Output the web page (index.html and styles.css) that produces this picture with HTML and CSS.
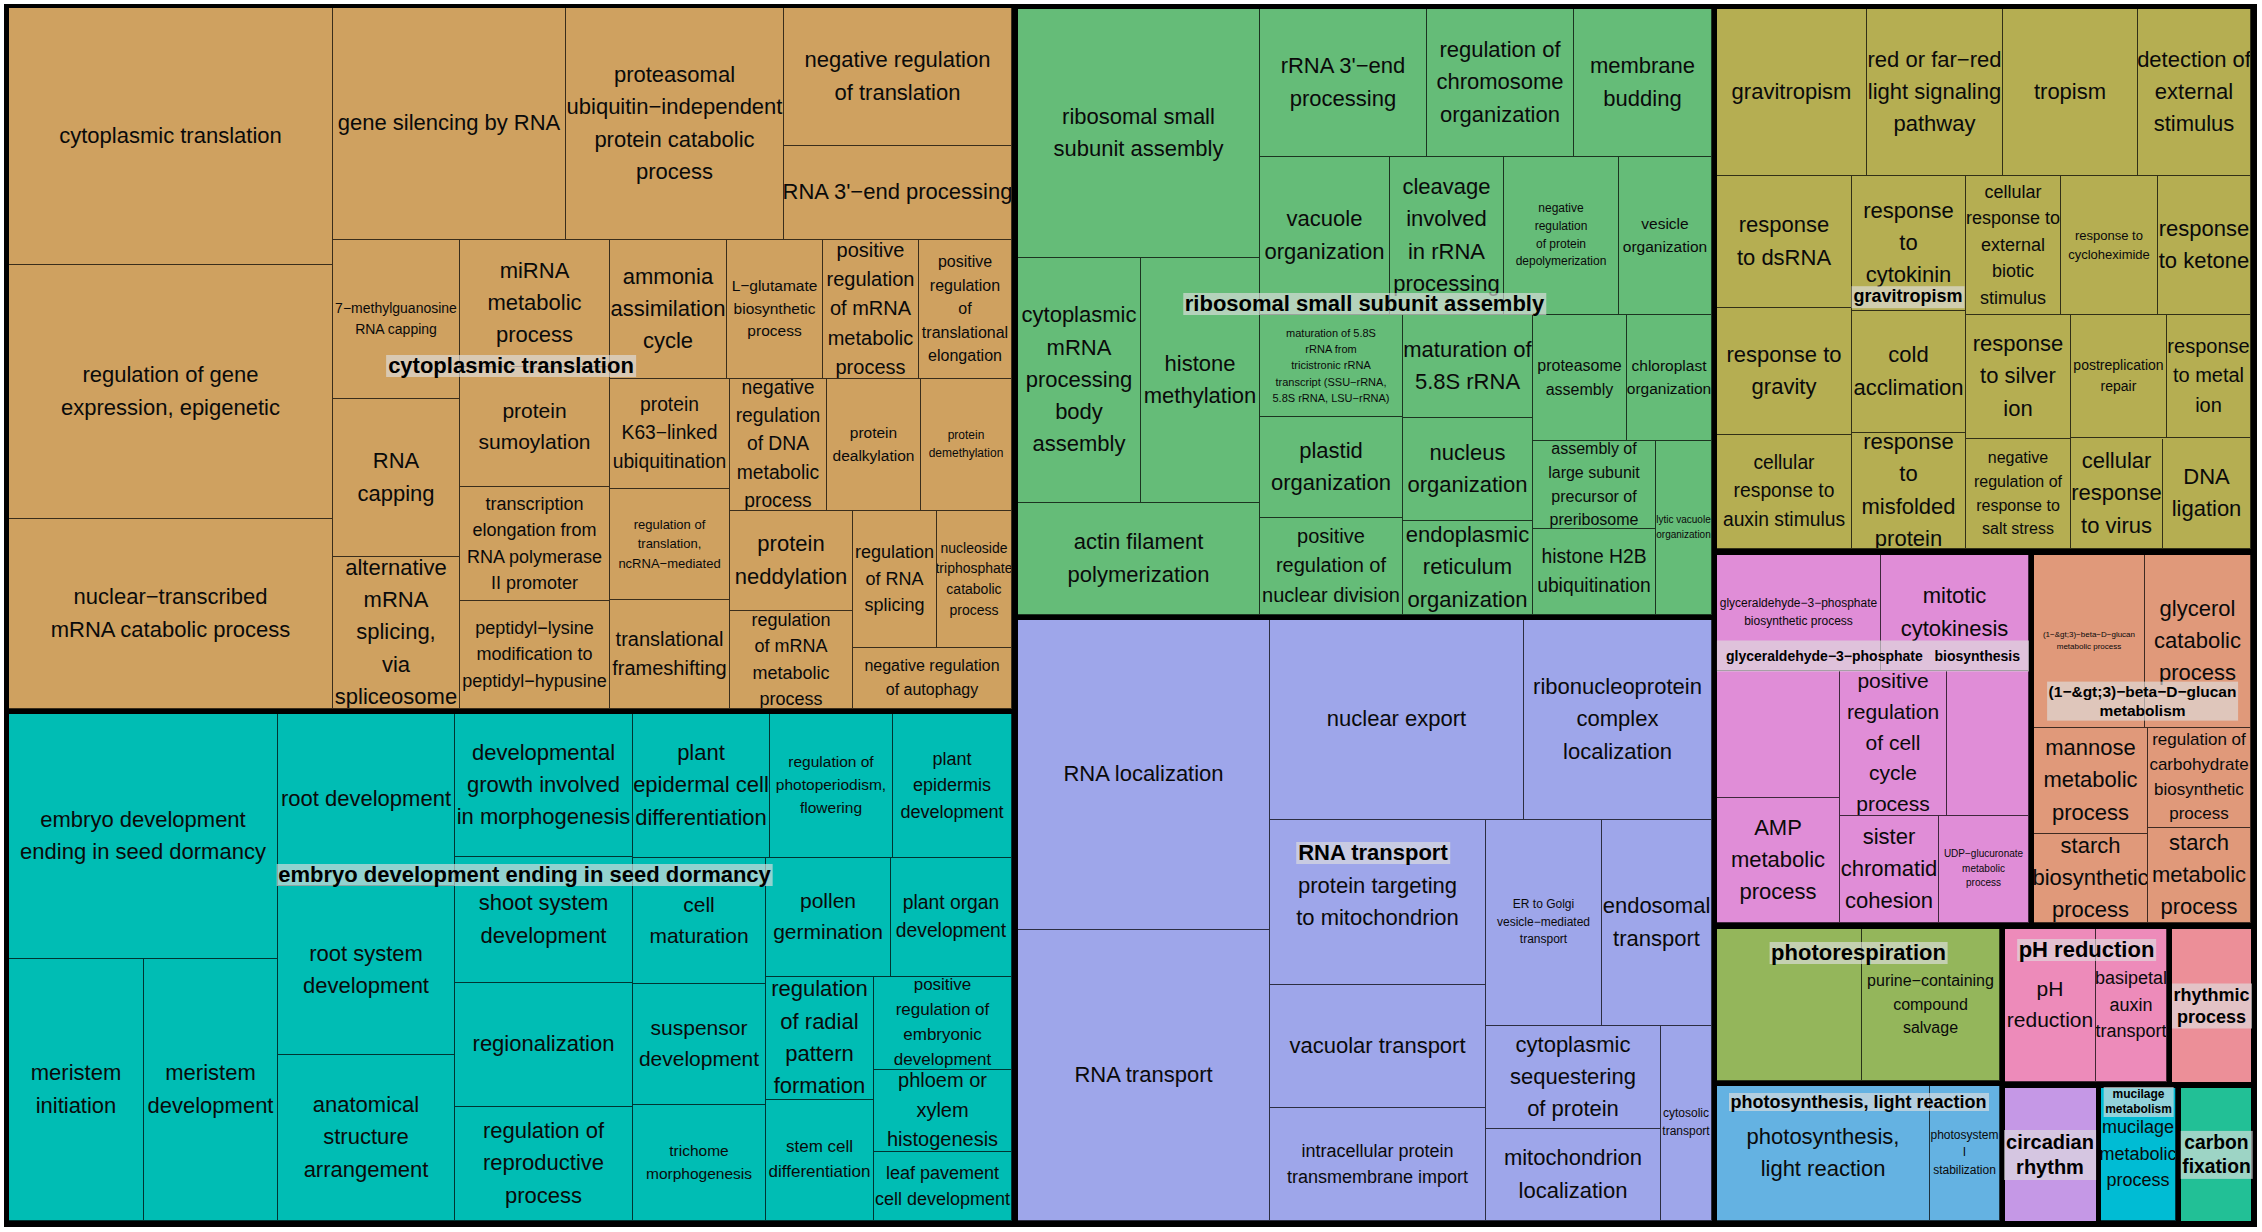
FILE: index.html
```html
<!DOCTYPE html>
<html lang="en">
<head>
<meta charset="utf-8">
<title>REVIGO treemap</title>
<link rel="stylesheet" href="styles.css">
</head>
<body>
<div class="treemap">

  <section class="group g-brown" style="left:9px;top:8px;width:1003px;height:701px">
    <div class="cell f22" style="left:0;top:0;width:324px;height:257px"><span>cytoplasmic translation</span></div>
    <div class="cell f22" style="left:0;top:257px;width:324px;height:254px"><span>regulation of gene<br>expression, epigenetic</span></div>
    <div class="cell f22" style="left:0;top:511px;width:324px;height:190px"><span>nuclear−transcribed<br>mRNA catabolic process</span></div>
    <div class="cell f22" style="left:324px;top:0;width:233px;height:232px"><span>gene silencing by RNA</span></div>
    <div class="cell f22" style="left:557px;top:0;width:218px;height:232px"><span>proteasomal<br>ubiquitin−independent<br>protein catabolic<br>process</span></div>
    <div class="cell f22" style="left:775px;top:0;width:228px;height:138px"><span>negative regulation<br>of translation</span></div>
    <div class="cell f22" style="left:775px;top:138px;width:228px;height:94px"><span>RNA 3'−end processing</span></div>
    <div class="cell f14" style="left:324px;top:232px;width:127px;height:159px"><span>7−methylguanosine<br>RNA capping</span></div>
    <div class="cell f22" style="left:324px;top:391px;width:127px;height:158px"><span>RNA<br>capping</span></div>
    <div class="cell f22" style="left:324px;top:549px;width:127px;height:152px"><span>alternative<br>mRNA<br>splicing,<br>via<br>spliceosome</span></div>
    <div class="cell f22" style="left:451px;top:232px;width:150px;height:127px"><span>miRNA<br>metabolic<br>process</span></div>
    <div class="cell f21" style="left:451px;top:359px;width:150px;height:120px"><span>protein<br>sumoylation</span></div>
    <div class="cell f18" style="left:451px;top:479px;width:150px;height:114px"><span>transcription<br>elongation from<br>RNA polymerase<br>II promoter</span></div>
    <div class="cell f18" style="left:451px;top:593px;width:150px;height:108px"><span>peptidyl−lysine<br>modification to<br>peptidyl−hypusine</span></div>
    <div class="cell f22" style="left:601px;top:232px;width:117px;height:139px"><span>ammonia<br>assimilation<br>cycle</span></div>
    <div class="cell f19" style="left:601px;top:371px;width:120px;height:110px"><span>protein<br>K63−linked<br>ubiquitination</span></div>
    <div class="cell f13" style="left:601px;top:481px;width:120px;height:111px"><span>regulation of<br>translation,<br>ncRNA−mediated</span></div>
    <div class="cell f20" style="left:601px;top:592px;width:120px;height:109px"><span>translational<br>frameshifting</span></div>
    <div class="cell f15" style="left:718px;top:232px;width:96px;height:139px"><span>L−glutamate<br>biosynthetic<br>process</span></div>
    <div class="cell f20" style="left:814px;top:232px;width:96px;height:139px"><span>positive<br>regulation<br>of mRNA<br>metabolic<br>process</span></div>
    <div class="cell f16" style="left:910px;top:232px;width:93px;height:139px"><span>positive<br>regulation<br>of<br>translational<br>elongation</span></div>
    <div class="cell f19" style="left:721px;top:371px;width:97px;height:132px"><span>negative<br>regulation<br>of DNA<br>metabolic<br>process</span></div>
    <div class="cell f15" style="left:818px;top:371px;width:94px;height:132px"><span>protein<br>dealkylation</span></div>
    <div class="cell f12" style="left:912px;top:371px;width:91px;height:132px"><span>protein<br>demethylation</span></div>
    <div class="cell f22" style="left:721px;top:503px;width:123px;height:100px"><span>protein<br>neddylation</span></div>
    <div class="cell f18" style="left:721px;top:603px;width:123px;height:98px"><span>regulation<br>of mRNA<br>metabolic<br>process</span></div>
    <div class="cell f18" style="left:844px;top:503px;width:84px;height:137px"><span>regulation<br>of RNA<br>splicing</span></div>
    <div class="cell f14" style="left:928px;top:503px;width:75px;height:137px"><span>nucleoside<br>triphosphate<br>catabolic<br>process</span></div>
    <div class="cell f16" style="left:844px;top:640px;width:159px;height:61px"><span>negative regulation<br>of autophagy</span></div>
    <div class="glabel f22" style="left:502px;top:357.5px">cytoplasmic translation</div>
  </section>

  <section class="group g-teal" style="left:9px;top:714px;width:1003px;height:507px">
    <div class="cell f22" style="left:0;top:0;width:269px;height:245px"><span>embryo development<br>ending in seed dormancy</span></div>
    <div class="cell f22" style="left:0;top:245px;width:135px;height:262px"><span>meristem<br>initiation</span></div>
    <div class="cell f22" style="left:135px;top:245px;width:134px;height:262px"><span>meristem<br>development</span></div>
    <div class="cell f22" style="left:269px;top:0;width:177px;height:172px"><span>root development</span></div>
    <div class="cell f22" style="left:269px;top:172px;width:177px;height:169px"><span>root system<br>development</span></div>
    <div class="cell f22" style="left:269px;top:341px;width:177px;height:166px"><span>anatomical<br>structure<br>arrangement</span></div>
    <div class="cell f22" style="left:446px;top:0;width:178px;height:143px"><span>developmental<br>growth involved<br>in morphogenesis</span></div>
    <div class="cell f22" style="left:446px;top:143px;width:178px;height:126px"><span>shoot system<br>development</span></div>
    <div class="cell f22" style="left:446px;top:269px;width:178px;height:124px"><span>regionalization</span></div>
    <div class="cell f22" style="left:446px;top:393px;width:178px;height:114px"><span>regulation of<br>reproductive<br>process</span></div>
    <div class="cell f22" style="left:624px;top:0;width:137px;height:144px"><span>plant<br>epidermal cell<br>differentiation</span></div>
    <div class="cell f21" style="left:624px;top:144px;width:133px;height:126px"><span>cell<br>maturation</span></div>
    <div class="cell f21" style="left:624px;top:270px;width:133px;height:121px"><span>suspensor<br>development</span></div>
    <div class="cell f15" style="left:624px;top:391px;width:133px;height:116px"><span>trichome<br>morphogenesis</span></div>
    <div class="cell f15" style="left:761px;top:0;width:123px;height:144px"><span>regulation of<br>photoperiodism,<br>flowering</span></div>
    <div class="cell f18" style="left:884px;top:0;width:119px;height:144px"><span>plant<br>epidermis<br>development</span></div>
    <div class="cell f21" style="left:757px;top:144px;width:125px;height:119px"><span>pollen<br>germination</span></div>
    <div class="cell f19" style="left:882px;top:144px;width:121px;height:119px"><span>plant organ<br>development</span></div>
    <div class="cell f22" style="left:757px;top:263px;width:108px;height:123px"><span>regulation<br>of radial<br>pattern<br>formation</span></div>
    <div class="cell f17" style="left:757px;top:386px;width:108px;height:121px"><span>stem cell<br>differentiation</span></div>
    <div class="cell f17" style="left:865px;top:263px;width:138px;height:93px"><span>positive<br>regulation of<br>embryonic<br>development</span></div>
    <div class="cell f20" style="left:865px;top:356px;width:138px;height:82px"><span>phloem or<br>xylem<br>histogenesis</span></div>
    <div class="cell f18" style="left:865px;top:438px;width:138px;height:69px"><span>leaf pavement<br>cell development</span></div>
    <div class="glabel f22" style="left:515.5px;top:160.5px">embryo development ending in seed dormancy</div>
  </section>

  <section class="group g-green" style="left:1018px;top:9px;width:694px;height:606px">
    <div class="cell f22" style="left:0;top:0;width:242px;height:249px"><span>ribosomal small<br>subunit assembly</span></div>
    <div class="cell f22" style="left:0;top:249px;width:123px;height:245px"><span>cytoplasmic<br>mRNA<br>processing<br>body<br>assembly</span></div>
    <div class="cell f22" style="left:123px;top:249px;width:119px;height:245px"><span>histone<br>methylation</span></div>
    <div class="cell f22" style="left:0;top:494px;width:242px;height:112px"><span>actin filament<br>polymerization</span></div>
    <div class="cell f22" style="left:242px;top:0;width:167px;height:148px"><span>rRNA 3'−end<br>processing</span></div>
    <div class="cell f22" style="left:409px;top:0;width:147px;height:148px"><span>regulation of<br>chromosome<br>organization</span></div>
    <div class="cell f22" style="left:556px;top:0;width:138px;height:148px"><span>membrane<br>budding</span></div>
    <div class="cell f22" style="left:242px;top:148px;width:130px;height:158px"><span>vacuole<br>organization</span></div>
    <div class="cell f22" style="left:372px;top:148px;width:114px;height:158px"><span>cleavage<br>involved<br>in rRNA<br>processing</span></div>
    <div class="cell f12" style="left:486px;top:148px;width:115px;height:158px"><span>negative<br>regulation<br>of protein<br>depolymerization</span></div>
    <div class="cell f15" style="left:601px;top:148px;width:93px;height:158px"><span>vesicle<br>organization</span></div>
    <div class="cell f11" style="left:242px;top:306px;width:143px;height:102px"><span>maturation of 5.8S<br>rRNA from<br>tricistronic rRNA<br>transcript (SSU−rRNA,<br>5.8S rRNA, LSU−rRNA)</span></div>
    <div class="cell f22" style="left:385px;top:306px;width:130px;height:103px"><span>maturation of<br>5.8S rRNA</span></div>
    <div class="cell f16" style="left:515px;top:306px;width:94px;height:126px"><span>proteasome<br>assembly</span></div>
    <div class="cell f15" style="left:609px;top:306px;width:85px;height:126px"><span>chloroplast<br>organization</span></div>
    <div class="cell f22" style="left:242px;top:408px;width:143px;height:101px"><span>plastid<br>organization</span></div>
    <div class="cell f22" style="left:385px;top:409px;width:130px;height:103px"><span>nucleus<br>organization</span></div>
    <div class="cell f20" style="left:242px;top:509px;width:143px;height:97px"><span>positive<br>regulation of<br>nuclear division</span></div>
    <div class="cell f22" style="left:385px;top:512px;width:130px;height:94px"><span>endoplasmic<br>reticulum<br>organization</span></div>
    <div class="cell f16" style="left:515px;top:432px;width:123px;height:88px"><span>assembly of<br>large subunit<br>precursor of<br>preribosome</span></div>
    <div class="cell f19" style="left:515px;top:520px;width:123px;height:86px"><span>histone H2B<br>ubiquitination</span></div>
    <div class="cell f10" style="left:638px;top:432px;width:56px;height:174px"><span>lytic vacuole<br>organization</span></div>
    <div class="glabel f22" style="left:346.5px;top:295px">ribosomal small subunit assembly</div>
  </section>

  <section class="group g-purple" style="left:1018px;top:620px;width:694px;height:601px">
    <div class="cell f22" style="left:0;top:0;width:252px;height:310px"><span>RNA localization</span></div>
    <div class="cell f22" style="left:0;top:310px;width:252px;height:291px"><span>RNA transport</span></div>
    <div class="cell f22" style="left:252px;top:0;width:254px;height:200px"><span>nuclear export</span></div>
    <div class="cell f22" style="left:506px;top:0;width:188px;height:200px"><span>ribonucleoprotein<br>complex<br>localization</span></div>
    <div class="cell f22" style="left:252px;top:200px;width:216px;height:165px"><span>protein targeting<br>to mitochondrion</span></div>
    <div class="cell f22" style="left:252px;top:365px;width:216px;height:123px"><span>vacuolar transport</span></div>
    <div class="cell f18" style="left:252px;top:488px;width:216px;height:113px"><span>intracellular protein<br>transmembrane import</span></div>
    <div class="cell f12" style="left:468px;top:200px;width:116px;height:206px"><span>ER to Golgi<br>vesicle−mediated<br>transport</span></div>
    <div class="cell f22" style="left:584px;top:200px;width:110px;height:206px"><span>endosomal<br>transport</span></div>
    <div class="cell f22" style="left:468px;top:406px;width:175px;height:103px"><span>cytoplasmic<br>sequestering<br>of protein</span></div>
    <div class="cell f22" style="left:468px;top:509px;width:175px;height:92px"><span>mitochondrion<br>localization</span></div>
    <div class="cell f12" style="left:643px;top:406px;width:51px;height:195px"><span>cytosolic<br>transport</span></div>
    <div class="glabel f22" style="left:355px;top:232.5px">RNA transport</div>
  </section>

  <section class="group g-olive" style="left:1717px;top:9px;width:534px;height:540px">
    <div class="cell f22" style="left:0;top:0;width:150px;height:167px"><span>gravitropism</span></div>
    <div class="cell f22" style="left:150px;top:0;width:136px;height:167px"><span>red or far−red<br>light signaling<br>pathway</span></div>
    <div class="cell f22" style="left:286px;top:0;width:135px;height:167px"><span>tropism</span></div>
    <div class="cell f22" style="left:421px;top:0;width:113px;height:167px"><span>detection of<br>external<br>stimulus</span></div>
    <div class="cell f22" style="left:0;top:167px;width:135px;height:132px"><span>response<br>to dsRNA</span></div>
    <div class="cell f22" style="left:135px;top:167px;width:114px;height:135px"><span>response<br>to<br>cytokinin</span></div>
    <div class="cell f18" style="left:249px;top:167px;width:95px;height:139px"><span>cellular<br>response to<br>external<br>biotic<br>stimulus</span></div>
    <div class="cell f13" style="left:344px;top:167px;width:97px;height:139px"><span>response to<br>cycloheximide</span></div>
    <div class="cell f22" style="left:441px;top:167px;width:93px;height:139px"><span>response<br>to ketone</span></div>
    <div class="cell f22" style="left:0;top:299px;width:135px;height:127px"><span>response to<br>gravity</span></div>
    <div class="cell f22" style="left:135px;top:302px;width:114px;height:122px"><span>cold<br>acclimation</span></div>
    <div class="cell f22" style="left:249px;top:306px;width:105px;height:124px"><span>response<br>to silver<br>ion</span></div>
    <div class="cell f14" style="left:354px;top:306px;width:96px;height:123px"><span>postreplication<br>repair</span></div>
    <div class="cell f20" style="left:450px;top:306px;width:84px;height:123px"><span>response<br>to metal<br>ion</span></div>
    <div class="cell f19" style="left:0;top:426px;width:135px;height:114px"><span>cellular<br>response to<br>auxin stimulus</span></div>
    <div class="cell f22" style="left:135px;top:424px;width:114px;height:116px"><span>response<br>to<br>misfolded<br>protein</span></div>
    <div class="cell f16" style="left:249px;top:430px;width:105px;height:110px"><span>negative<br>regulation of<br>response to<br>salt stress</span></div>
    <div class="cell f22" style="left:354px;top:430px;width:92px;height:110px"><span>cellular<br>response<br>to virus</span></div>
    <div class="cell f22" style="left:446px;top:429px;width:88px;height:111px"><span>DNA<br>ligation</span></div>
    <div class="glabel f18 tall" style="left:191px;top:288px">gravitropism</div>
  </section>

  <section class="group g-pink" style="left:1717px;top:555px;width:312px;height:368px">
    <div class="cell f12" style="left:0;top:0;width:164px;height:116px"><span>glyceraldehyde−3−phosphate<br>biosynthetic process</span></div>
    <div class="cell f22" style="left:164px;top:0;width:148px;height:116px"><span>mitotic<br>cytokinesis</span></div>
    <div class="cell" style="left:0;top:116px;width:123px;height:127px"></div>
    <div class="cell f21" style="left:123px;top:116px;width:107px;height:145px"><span>positive<br>regulation<br>of cell<br>cycle<br>process</span></div>
    <div class="cell" style="left:230px;top:116px;width:82px;height:145px"></div>
    <div class="cell f22" style="left:0;top:243px;width:123px;height:125px"><span>AMP<br>metabolic<br>process</span></div>
    <div class="cell f22" style="left:123px;top:261px;width:99px;height:107px"><span>sister<br>chromatid<br>cohesion</span></div>
    <div class="cell f10" style="left:222px;top:261px;width:90px;height:107px"><span>UDP−glucuronate<br>metabolic<br>process</span></div>
    <div class="glabel f14 band" style="left:156px;top:100.5px">glyceraldehyde−3−phosphate&nbsp;&nbsp;&nbsp;biosynthesis</div>
  </section>

  <section class="group g-orange" style="left:2034px;top:555px;width:217px;height:368px">
    <div class="cell f8" style="left:0;top:0;width:111px;height:173px"><span>(1−&amp;gt;3)−beta−D−glucan<br>metabolic process</span></div>
    <div class="cell f22" style="left:111px;top:0;width:106px;height:173px"><span>glycerol<br>catabolic<br>process</span></div>
    <div class="cell f22" style="left:0;top:173px;width:114px;height:106px"><span>mannose<br>metabolic<br>process</span></div>
    <div class="cell f17" style="left:114px;top:173px;width:103px;height:100px"><span>regulation of<br>carbohydrate<br>biosynthetic<br>process</span></div>
    <div class="cell f22" style="left:0;top:279px;width:114px;height:89px"><span>starch<br>biosynthetic<br>process</span></div>
    <div class="cell f22" style="left:114px;top:273px;width:103px;height:95px"><span>starch<br>metabolic<br>process</span></div>
    <div class="glabel f15 two" style="left:108.5px;top:146px">(1−&amp;gt;3)−beta−D−glucan<br>metabolism</div>
  </section>

  <section class="group g-leaf" style="left:1717px;top:929px;width:283px;height:152px">
    <div class="cell" style="left:0;top:0;width:145px;height:152px"></div>
    <div class="cell f16" style="left:145px;top:0;width:138px;height:152px"><span>purine−containing<br>compound<br>salvage</span></div>
    <div class="glabel f22" style="left:141.5px;top:23.5px">photorespiration</div>
  </section>

  <section class="group g-rose" style="left:2005px;top:929px;width:162px;height:153px">
    <div class="cell f21" style="left:0;top:0;width:91px;height:153px"><span>pH<br>reduction</span></div>
    <div class="cell f18" style="left:91px;top:0;width:71px;height:153px"><span>basipetal<br>auxin<br>transport</span></div>
    <div class="glabel f22" style="left:81.5px;top:21px">pH reduction</div>
  </section>

  <section class="group g-salmon" style="left:2172px;top:929px;width:79px;height:153px">
    <div class="glabel f18 two" style="left:39.5px;top:76.5px">rhythmic<br>process</div>
  </section>

  <section class="group g-sky" style="left:1717px;top:1086px;width:283px;height:135px">
    <div class="cell f22" style="left:0;top:0;width:213px;height:135px"><span>photosynthesis,<br>light reaction</span></div>
    <div class="cell f12" style="left:213px;top:0;width:70px;height:135px"><span>photosystem<br>I<br>stabilization</span></div>
    <div class="glabel f18" style="left:141.5px;top:16px">photosynthesis, light reaction</div>
  </section>

  <section class="group g-lilac" style="left:2005px;top:1088px;width:91px;height:133px">
    <div class="glabel f20 two" style="left:45px;top:66.5px">circadian<br>rhythm</div>
  </section>

  <section class="group g-cyan" style="left:2101px;top:1088px;width:75px;height:133px">
    <div class="cell f18" style="left:0;top:0;width:75px;height:133px"><span>mucilage<br>metabolic<br>process</span></div>
    <div class="glabel f12 two" style="left:37.5px;top:14px">mucilage<br>metabolism</div>
  </section>

  <section class="group g-jade" style="left:2181px;top:1088px;width:70px;height:133px">
    <div class="glabel f19 two" style="left:35.5px;top:66.5px">carbon<br>fixation</div>
  </section>

</div>
</body>
</html>
```

FILE: styles.css
```css
* {
  box-sizing: border-box;
}

html,
body {
  margin: 0;
  padding: 0;
  background: #ffffff;
}

body {
  font-family: "Liberation Sans", Arial, "DejaVu Sans", sans-serif;
  color: #000000;
}

.treemap {
  position: relative;
  width: 2262px;
  height: 1232px;
  overflow: hidden;
  background: #ffffff;
}

/* black frame that shows between the groups */
.treemap::before {
  content: "";
  position: absolute;
  left: 4px;
  top: 4px;
  width: 2253px;
  height: 1223px;
  background: #000000;
}

.group {
  position: absolute;
}

.cell {
  position: absolute;
  display: flex;
  align-items: center;
  justify-content: center;
  text-align: center;
  white-space: nowrap;
  overflow: hidden;
  line-height: 1.47;
  color: #0a0a0a;
  border-right: 1px solid rgba(0, 0, 0, 0.72);
  border-bottom: 1px solid rgba(0, 0, 0, 0.72);
}

.cell span {
  display: block;
}

/* group (parent term) labels */
.glabel {
  position: absolute;
  z-index: 1;
  transform: translate(-50%, -50%);
  padding: 0 2px;
  background: rgba(222, 222, 222, 0.66);
  color: #000000;
  font-weight: 700;
  line-height: 1;
  white-space: nowrap;
  text-align: center;
}

.glabel.two {
  line-height: 1.25;
}

.glabel.tall {
  line-height: 1.2;
}

.glabel.band {
  line-height: 31px;
  padding: 0 9px;
}

/* group fills */
.g-brown { background: #cfa160; }
.g-teal { background: #00bdb4; }
.g-green { background: #65bc78; }
.g-purple { background: #9ea6ea; }
.g-olive { background: #b5ae52; }
.g-pink { background: #e08dd7; }
.g-orange { background: #e0997a; }
.g-leaf { background: #94b65b; }
.g-rose { background: #ed8bba; }
.g-salmon { background: #ec8f98; }
.g-sky { background: #64b2e2; }
.g-lilac { background: #c598e6; }
.g-cyan { background: #00bcd4; }
.g-jade { background: #22c096; }

/* label sizes */
.f8 { font-size: 8px; }
.f10 { font-size: 10px; }
.f11 { font-size: 11px; }
.f12 { font-size: 12px; }
.f13 { font-size: 13px; }
.f14 { font-size: 14px; }
.f15 { font-size: 15.5px; }
.f16 { font-size: 16px; }
.f17 { font-size: 17px; }
.f18 { font-size: 18px; }
.f19 { font-size: 19.3px; }
.f20 { font-size: 20px; }
.f21 { font-size: 21px; }
.f22 { font-size: 22px; }
```
